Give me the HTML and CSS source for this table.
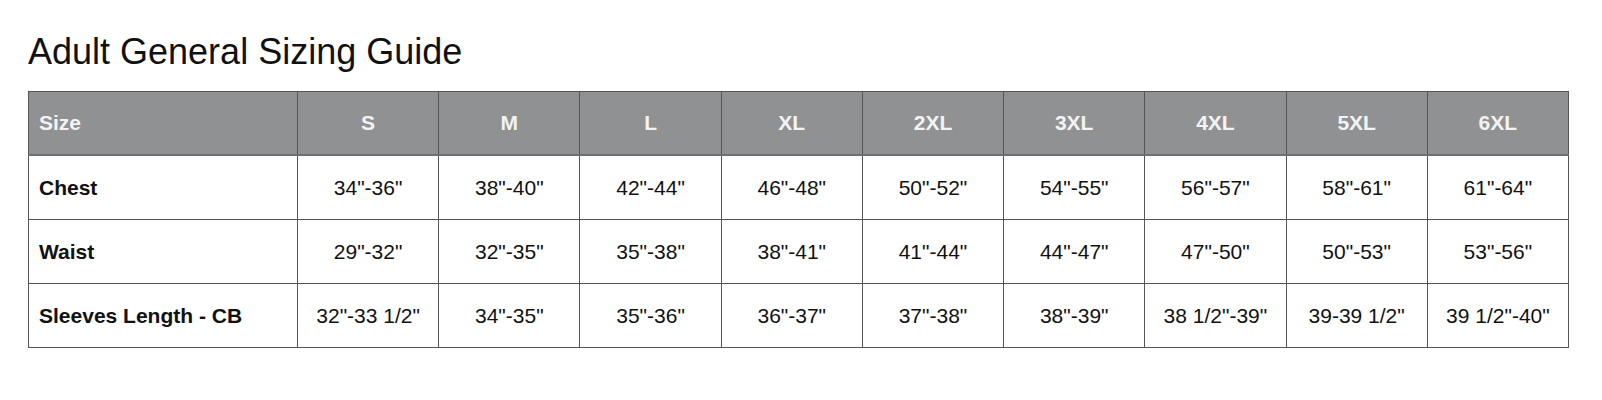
FILE: index.html
```html
<!DOCTYPE html>
<html>
<head>
<meta charset="utf-8">
<link rel="stylesheet" href="styles.css">
</head>
<body>
<div class="page">
  <h1 class="title">Adult General Sizing Guide</h1>
  <table class="sizes">
    <colgroup>
      <col class="col-label">
      <col><col><col><col><col><col><col><col><col>
    </colgroup>
    <thead>
      <tr>
        <th class="label">Size</th>
        <th>S</th><th>M</th><th>L</th><th>XL</th><th>2XL</th><th>3XL</th><th>4XL</th><th>5XL</th><th>6XL</th>
      </tr>
    </thead>
    <tbody>
      <tr>
        <td class="label">Chest</td>
        <td>34"-36"</td><td>38"-40"</td><td>42"-44"</td><td>46"-48"</td><td>50"-52"</td><td>54"-55"</td><td>56"-57"</td><td>58"-61"</td><td>61"-64"</td>
      </tr>
      <tr>
        <td class="label">Waist</td>
        <td>29"-32"</td><td>32"-35"</td><td>35"-38"</td><td>38"-41"</td><td>41"-44"</td><td>44"-47"</td><td>47"-50"</td><td>50"-53"</td><td>53"-56"</td>
      </tr>
      <tr>
        <td class="label">Sleeves Length - CB</td>
        <td>32"-33 1/2"</td><td>34"-35"</td><td>35"-36"</td><td>36"-37"</td><td>37"-38"</td><td>38"-39"</td><td>38 1/2"-39"</td><td>39-39 1/2"</td><td>39 1/2"-40"</td>
      </tr>
    </tbody>
  </table>
</div>
</body>
</html>
```

FILE: styles.css
```css
html, body {
  margin: 0;
  padding: 0;
  background: #ffffff;
}

.page {
  padding: 34px 0 0 28px;
  font-family: "Liberation Sans", Arial, sans-serif;
  color: #111111;
}

.title {
  margin: 0 0 21px 0;
  font-size: 36px;
  line-height: 36px;
  height: 36px;
  font-weight: normal;
  color: #111111;
}

.sizes {
  width: 1541px;
  table-layout: fixed;
  border-collapse: collapse;
  border: 1px solid #7a7a7a;
}

.col-label {
  width: 269px;
}

.sizes th,
.sizes td {
  height: 63px;
  padding: 0;
  border: 1px solid #555555;
  text-align: center;
  vertical-align: middle;
  font-size: 21px;
  line-height: 24px;
}

.sizes th {
  background: #8f9193;
  color: #f3f3f3;
  font-weight: bold;
  border-bottom: 2px solid #6d6f71;
  height: 62px;
}

.sizes td {
  color: #111111;
  font-weight: normal;
}

.sizes .label {
  text-align: left;
  padding-left: 10px;
  font-weight: bold;
}

.sizes thead .label {
  color: #f3f3f3;
}
```
